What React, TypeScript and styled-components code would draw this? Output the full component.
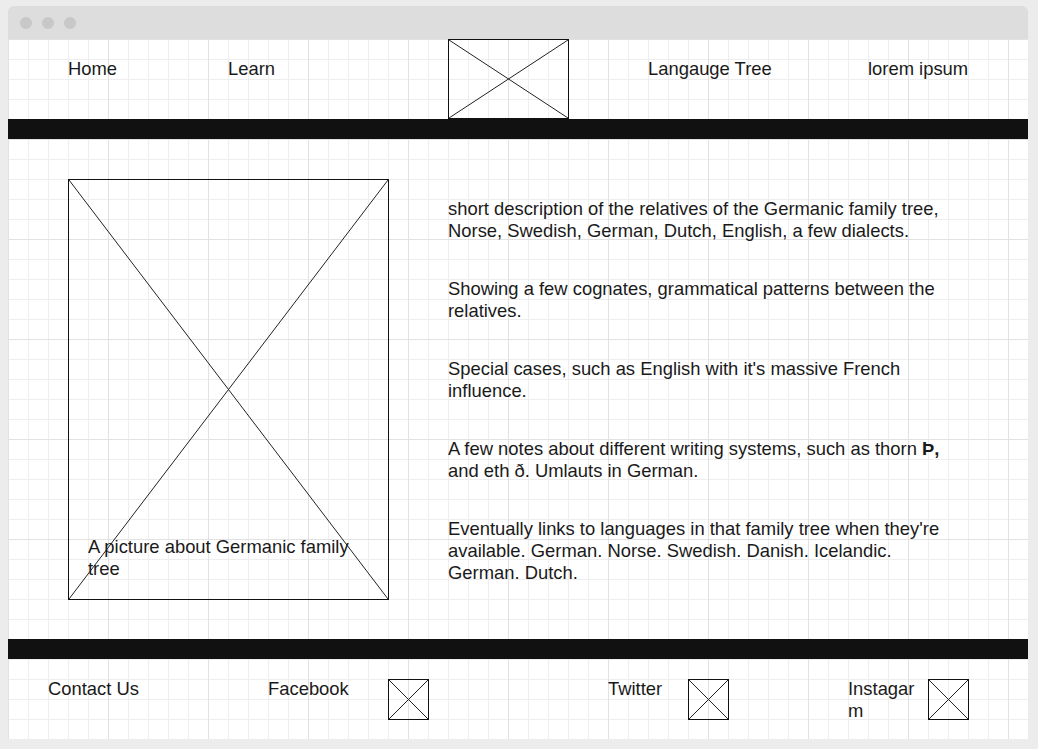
import React from 'react';
import styled, { createGlobalStyle } from 'styled-components';

const GlobalStyle = createGlobalStyle`
  html, body {
    margin: 0;
    background: #ececec;
  }
  body {
    font-family: 'Liberation Sans', Arial, Helvetica, sans-serif;
    font-size: 18.4px;
    color: #1a1a1a;
  }
`;

const paragraphs: React.ReactNode[] = [
  'short description of the relatives of the Germanic family tree, Norse, Swedish, German, Dutch, English, a few dialects.',
  'Showing a few cognates, grammatical patterns between the relatives.',
  "Special cases, such as English with it's massive French influence.",
  <>
    A few notes about different writing systems, such as thorn <b>Þ,</b> and eth ð. Umlauts in German.
  </>,
  "Eventually links to languages in that family tree when they're available. German. Norse. Swedish. Danish. Icelandic. German. Dutch.",
];

const Placeholder = ({ w, h }: { w: number; h: number }) => (
  <Frame $w={w} $h={h}>
    <svg viewBox="0 0 100 100" preserveAspectRatio="none">
      <line x1="0" y1="0" x2="100" y2="100" stroke="#222" strokeWidth="1" vectorEffect="non-scaling-stroke" />
      <line x1="100" y1="0" x2="0" y2="100" stroke="#222" strokeWidth="1" vectorEffect="non-scaling-stroke" />
    </svg>
  </Frame>
);

const App = () => {
  return (
    <>
      <GlobalStyle />
      <Page>
        <Window>
          <TitleBar>
            <Dot />
            <Dot />
            <Dot />
          </TitleBar>
          <Canvas>
            <Header>
              <NavLink>Home</NavLink>
              <NavLink>Learn</NavLink>
              <Placeholder w={121} h={80} />
              <NavLink>Langauge Tree</NavLink>
              <NavLink>lorem ipsum</NavLink>
            </Header>
            <Bar />
            <Main>
              <Figure>
                <Placeholder w={321} h={421} />
                <Caption>A picture about Germanic family tree</Caption>
              </Figure>
              <TextColumn>
                {paragraphs.map((p, i) => (
                  <Para key={i}>{p}</Para>
                ))}
              </TextColumn>
            </Main>
            <Bar />
            <Footer>
              <FooterGroup $w={220}>
                <FooterLabel $w={120}>Contact Us</FooterLabel>
              </FooterGroup>
              <FooterGroup $w={340}>
                <FooterLabel $w={120}>Facebook</FooterLabel>
                <IconSlot>
                  <Placeholder w={41} h={41} />
                </IconSlot>
              </FooterGroup>
              <FooterGroup $w={240}>
                <FooterLabel $w={80}>Twitter</FooterLabel>
                <IconSlot>
                  <Placeholder w={41} h={41} />
                </IconSlot>
              </FooterGroup>
              <FooterGroup $w={180}>
                <FooterLabel $w={80}>Instagarm</FooterLabel>
                <IconSlot>
                  <Placeholder w={41} h={41} />
                </IconSlot>
              </FooterGroup>
            </Footer>
          </Canvas>
        </Window>
      </Page>
    </>
  );
};

export default App;

const Page = styled.div`
  padding: 6px 0 10px 8px;
`;

const Window = styled.div`
  width: 1020px;
  border-radius: 6px 6px 0 0;
  overflow: hidden;
`;

const TitleBar = styled.div`
  height: 33px;
  background: #dddddd;
  display: flex;
  align-items: center;
  gap: 10px;
  padding-left: 12px;
`;

const Dot = styled.span`
  width: 12px;
  height: 12px;
  border-radius: 50%;
  background: #c8c8c8;
`;

const Canvas = styled.div`
  height: 700px;
  display: flex;
  flex-direction: column;
  background-color: #fff;
  background-image: linear-gradient(to right, #e2e2e2 1px, transparent 1px),
    linear-gradient(to bottom, #e2e2e2 1px, transparent 1px),
    linear-gradient(to right, #eeeeee 1px, transparent 1px),
    linear-gradient(to bottom, #eeeeee 1px, transparent 1px);
  background-size: 100px 100px, 100px 100px, 20px 20px, 20px 20px;
`;

const Header = styled.header`
  height: 80px;
  display: grid;
  grid-template-columns: 160px 220px 200px 220px 1fr;
  padding-left: 60px;
`;

const NavLink = styled.div`
  padding-top: 19px;
  line-height: 22px;
  white-space: nowrap;
`;

const Frame = styled.div<{ $w: number; $h: number }>`
  box-sizing: border-box;
  width: ${({ $w }) => $w}px;
  height: ${({ $h }) => $h}px;
  border: 1px solid #111;

  svg {
    display: block;
    width: 100%;
    height: 100%;
  }
`;

const Bar = styled.div`
  height: 20px;
  background: #111;
`;

const Main = styled.main`
  height: 500px;
  box-sizing: border-box;
  display: grid;
  grid-template-columns: 321px 505px;
  column-gap: 59px;
  padding: 40px 0 0 60px;
`;

const Figure = styled.div`
  position: relative;
  align-self: start;
`;

const Caption = styled.div`
  position: absolute;
  top: 357px;
  left: 20px;
  width: 280px;
  line-height: 22px;
`;

const TextColumn = styled.div`
  padding-top: 19px;
  display: flex;
  flex-direction: column;
`;

const Para = styled.p`
  margin: 0;
  height: 80px;
  line-height: 22px;
`;

const Footer = styled.footer`
  height: 80px;
  box-sizing: border-box;
  display: flex;
  padding: 19px 0 0 40px;
`;

const FooterGroup = styled.div<{ $w: number }>`
  width: ${({ $w }) => $w}px;
  display: flex;
  align-items: flex-start;
`;

const FooterLabel = styled.div<{ $w: number }>`
  box-sizing: border-box;
  width: ${({ $w }) => $w}px;
  padding-right: 10px;
  line-height: 22px;
  word-break: break-all;
`;

const IconSlot = styled.div`
  padding-top: 1px;
`;
